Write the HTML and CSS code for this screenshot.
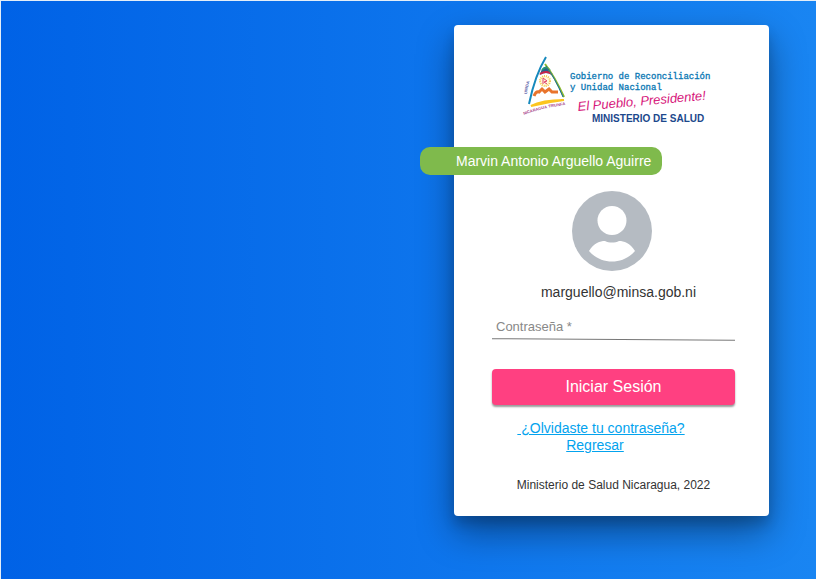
FILE: index.html
```html
<!DOCTYPE html>
<html lang="es">
<head>
<meta charset="utf-8">
<meta name="viewport" content="width=device-width, initial-scale=1">
<title>Iniciar Sesión</title>
<link rel="stylesheet" href="styles.css">
</head>
<body>
<main class="page">
  <section class="card">
    <svg class="logo" viewBox="0 0 188 72" role="img" aria-label="Ministerio de Salud">
      <path d="M15.500 20 L18 14 Q22 9 26 15 L28 20 Q22 16 15.500 20Z" fill="#25618d"/>
      <path d="M18 15 Q22 10 26 15" fill="none" stroke="#20a070" stroke-width="1.500"/>
      <path d="M16 19 Q22 15 28 19" fill="none" stroke="#c9234a" stroke-width="2"/>
      <path d="M22 2 Q11 20 5 49" fill="none" stroke="#1689bd" stroke-width="2"/>
      <path d="M21 9 Q31 22 40 42" fill="none" stroke="#8ab82e" stroke-width="2"/>
      <path d="M22 11 Q31 23 39 42" fill="none" stroke="#176c9c"/>
      <circle cx="21" cy="26" r="5" fill="#fff8dc" stroke="#f4c84a" stroke-width="2" stroke-dasharray="1 1"/>
      <path d="M19 29v-6l4 3-3 1 3 2" fill="none" stroke="#e0406a"/>
      <path d="M10 41 Q12 36 15 37 L18 34 L21 37 L25 34 L28 37 L34 37" fill="none" stroke="#e9742c" stroke-width="3"/>
      <path d="M7 51 Q18 45 40 45 Q23 47 7 51Z" fill="#fcc51f" stroke="#fcc51f" stroke-width="2"/>
      <path id="side-arc" d="M3 39 Q4 28 10 16" fill="none"/>
      <path id="base-arc" d="M0 60 Q22 51 60 48" fill="none"/>
      <text class="logo-seal logo-seal-blue"><textPath href="#side-arc">UNIDA</textPath></text>
      <text class="logo-seal"><textPath href="#base-arc">NICARAGUA TRIUNFA</textPath></text>
      <text class="logo-gov" x="46" y="24">Gobierno de Reconciliación</text>
      <text class="logo-gov" x="46" y="35">y Unidad Nacional</text>
      <text class="logo-slogan" x="54" y="56" transform="rotate(-5 54 56)">El Pueblo, Presidente!</text>
      <text class="logo-ministry" x="68" y="67">MINISTERIO DE SALUD</text>
    </svg>
    <p class="user-tag">Marvin Antonio Arguello Aguirre</p>
    <svg class="avatar" viewBox="0 0 80 80" aria-hidden="true">
      <circle cx="40" cy="40" r="40" fill="#b5bbc2"/>
      <circle cx="40" cy="29.500" r="14.500" fill="#fff"/>
      <path d="M17 60 C22 52 28 50 33 50 C37 52 43 52 47 50 C52 50 58 52 63 60 C51 74 29 74 17 60Z" fill="#fff"/>
    </svg>
    <p class="email">marguello@minsa.gob.ni</p>
    <form class="login">
      <div class="field">
        <input class="field-input" id="password" type="password" required>
        <label class="field-label" for="password">Contraseña *</label>
      </div>
      <button class="submit" type="submit">Iniciar Sesión</button>
    </form>
    <nav class="links">
      <a href="#recuperar">&nbsp;¿Olvidaste tu contraseña?</a>
      <a class="back" href="#regresar">Regresar</a>
    </nav>
    <footer class="footer">Ministerio de Salud Nicaragua, 2022</footer>
  </section>
</main>
</body>
</html>
```
FILE: styles.css
```css
* {
  box-sizing: border-box;
}

body {
  margin: 0;
  font-family: "Liberation Sans", Arial, sans-serif;
  font-size: 14px;
  color: #333;
}

p {
  margin: 0;
}

.page {
  display: flex;
  justify-content: flex-end;
  align-items: flex-start;
  min-height: 100vh;
  padding: 24px 47px 24px 24px;
  border-top: 1px solid #e4eef8;
  border-left: 1px solid #e4eef8;
  background: linear-gradient(90deg, #0062e6, #1985f2);
}

.card {
  display: flex;
  flex-direction: column;
  width: 100%;
  max-width: 315px;
  padding: 30px 34px 22px 38px;
  border-radius: 4px;
  background: #fff;
  box-shadow: 0 16px 36px rgba(0, 0, 0, 0.4), 0 8px 12px rgba(0, 0, 0, 0.15);
}

.logo {
  align-self: center;
  width: 188px;
  height: 72px;
  margin-left: 8px;
  overflow: visible;
}

.logo-seal {
  font-size: 4px;
  font-weight: bold;
  fill: #a8468c;
}

.logo-seal-blue {
  fill: #5a62a8;
}

.logo-gov {
  font-family: "Liberation Mono", monospace;
  font-size: 9px;
  fill: #0a78b4;
  stroke: #0a78b4;
  stroke-width: 0.3;
}

.logo-slogan {
  font-size: 13px;
  font-style: italic;
  fill: #d6147a;
}

.logo-ministry {
  font-size: 10px;
  font-weight: bold;
  fill: #1c488c;
}

.user-tag {
  align-self: flex-start;
  margin: 20px 0 0 -72px;
  padding: 0 11px 0 36px;
  border-radius: 10px;
  background: #7fba4c;
  color: #fff;
  line-height: 28px;
  white-space: nowrap;
}

.avatar {
  align-self: center;
  width: 80px;
  height: 80px;
  margin: 16px 4px 0 0;
}

.email {
  margin-top: 12px;
  padding-left: 10px;
  line-height: 18px;
  text-align: center;
}

.login {
  display: flex;
  flex-direction: column;
  gap: 29px;
  margin-top: 14px;
}

.field {
  position: relative;
}

.field::after {
  content: "";
  display: block;
  height: 1px;
  background: #777;
  transform: rotate(0.4deg);
}

.field-input {
  display: block;
  width: 100%;
  height: 24px;
  padding: 0 4px;
  border: 0;
  outline: 0;
  background: transparent;
  font: inherit;
}

.field-label {
  position: absolute;
  top: 0;
  left: 4px;
  color: #888;
  font-size: 13px;
  line-height: 24px;
  pointer-events: none;
}

.submit {
  height: 36px;
  padding: 0 16px;
  border: 0;
  border-radius: 4px;
  background: #ff4081;
  box-shadow: 0 2px 2px rgba(0, 0, 0, 0.4);
  color: #fff;
  font: inherit;
  font-size: 16px;
  line-height: 36px;
  cursor: pointer;
}

.links {
  display: flex;
  flex-direction: column;
  align-items: center;
  margin-top: 15px;
  padding-right: 25px;
  line-height: 17px;
}

.links a {
  color: #03a3ee;
}

.links .back {
  margin-right: 12px;
}

.footer {
  margin-top: 22px;
  font-size: 12px;
  line-height: 18px;
  text-align: center;
}
```
